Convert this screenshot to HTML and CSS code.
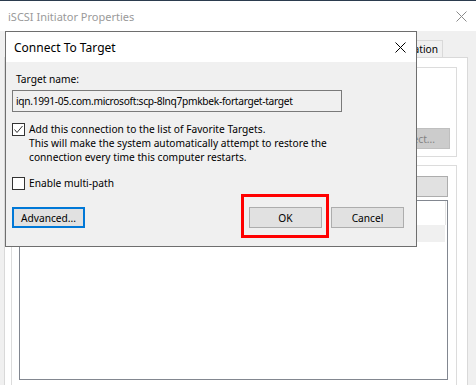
FILE: index.html
```html
<!DOCTYPE html>
<html>
<head>
<meta charset="utf-8">
<link rel="stylesheet" href="styles.css">
</head>
<body>
<div class="screen">
  <div class="bgwin">
    <div class="bg-titlebar">
      <span class="bg-title">iSCSI Initiator Properties</span>
      <svg class="bg-close" width="11" height="11" viewBox="0 0 11 11"><path d="M0.5 0.5 L10.5 10.5 M10.5 0.5 L0.5 10.5" stroke="#8a8a8a" stroke-width="1" fill="none"/></svg>
    </div>
    <div class="bg-body">
      <div class="tabs">
        <div class="tab">Configuration</div>
      </div>
      <div class="panel">
        <div class="group g1">
          <div class="row-end"><div class="btn btn-dis">Quick Connect...</div></div>
        </div>
        <div class="group g2">
          <div class="row-end"><div class="btn btn-refresh">Refresh</div></div>
          <div class="list">
            <div class="list-head"><div class="col"></div></div>
            <div class="list-row"></div>
          </div>
        </div>
      </div>
    </div>
  </div>

  <div class="dialog">
    <div class="dlg-titlebar">
      <span class="dlg-title">Connect To Target</span>
      <svg class="dlg-close" width="11" height="11" viewBox="0 0 11 11"><path d="M0.5 0.5 L10.5 10.5 M10.5 0.5 L0.5 10.5" stroke="#000" stroke-width="1" fill="none"/></svg>
    </div>
    <div class="dlg-body">
      <div class="label">Target name:</div>
      <div class="textbox">iqn.1991-05.com.microsoft:scp-8lnq7pmkbek-fortarget-target</div>
      <div class="check-row first">
        <span class="checkbox">
          <svg width="11" height="11" viewBox="0 0 11 11"><path d="M1.5 5.5 L4 8.5 L9.5 2" stroke="#333" stroke-width="1" fill="none"/></svg>
        </span>
        <div class="check-text">Add this connection to the list of Favorite Targets.<br>This will make the system automatically attempt to restore the<br>connection every time this computer restarts.</div>
      </div>
      <div class="check-row second">
        <span class="checkbox"></span>
        <div class="check-text">Enable multi-path</div>
      </div>
      <div class="btn-row">
        <div class="btn btn-focus">Advanced...</div>
        <div class="btn-group">
          <div class="btn">OK</div>
          <div class="btn">Cancel</div>
        </div>
      </div>
    </div>
  </div>
  <div class="highlight"></div>
</div>
</body>
</html>
```
FILE: styles.css
```css
* { box-sizing: border-box; }
html, body { margin: 0; padding: 0; }
body {
  font-family: "Noto Sans", "Open Sans", sans-serif;
  font-size: 10.2px;
  color: #000;
  background: #f0f0f0;
}
.screen {
  position: relative;
  width: 476px;
  height: 385px;
  overflow: hidden;
  background: #f0f0f0;
}
.bg-titlebar {
  height: 31px;
  background: #fff;
  border-top: 1px solid #2b3b4e;
  display: flex;
  align-items: center;
  justify-content: space-between;
  padding: 0 9px 0 8px;
}
.bg-title {
  color: #9a9a9a;
  font-size: 11px;
}
.bg-body {
  padding-top: 9px;
}
.tabs {
  margin-left: 4px;
  width: 464px;
  height: 17px;
  display: flex;
  justify-content: flex-end;
  padding-right: 25px;
}
.tab {
  height: 17px;
  border: 1px solid #d9d9d9;
  border-bottom: none;
  padding: 0 4px 0 5px;
  line-height: 16px;
  background: #f0f0f0;
  white-space: nowrap;
}
.panel {
  margin-left: 4px;
  width: 464px;
  height: 340px;
  background: #fff;
  border: 1px solid #d9d9d9;
  padding: 9px 10px 0 6px;
}
.group {
  border: 1px solid #dcdcdc;
}
.g1 {
  height: 90px;
  padding: 60px 6px 0 0;
}
.g2 {
  margin-top: 8px;
  height: 260px;
  padding: 10px 7px 0 7px;
}
.row-end {
  display: flex;
  justify-content: flex-end;
}
.btn {
  width: 73px;
  height: 21px;
  background: #e1e1e1;
  border: 1px solid #adadad;
  display: flex;
  align-items: center;
  justify-content: center;
  white-space: nowrap;
}
.btn-dis {
  width: 100px;
  background: #cccccc;
  border-color: #bfbfbf;
  color: #838383;
  justify-content: flex-end;
  padding-right: 14px;
}
.g2 .btn-refresh {
  width: 160px;
  margin-right: 1px;
  justify-content: flex-start;
  padding-left: 20px;
}
.list {
  margin-top: 3px;
  margin-right: 1px;
  height: 180px;
  border: 1px solid #828790;
  background: #fff;
}
.list-head {
  height: 24px;
  display: flex;
}
.list-head .col {
  width: 426px;
  border-right: 1px solid #e5e5e5;
}
.list-row {
  width: 425px;
  height: 17px;
  background: #f0f0f0;
}

/* dialog */
.dialog {
  position: absolute;
  left: 5px;
  top: 31px;
  width: 412px;
  height: 216px;
  border: 1px solid #6e6e6e;
  background: #f0f0f0;
}
.dlg-titlebar {
  height: 30px;
  background: #fff;
  display: flex;
  align-items: center;
  justify-content: space-between;
  padding: 0 10px 0 8px;
}
.dlg-title {
  font-size: 12px;
}
.dlg-body {
  padding: 10px 12px 0 6px;
}
.label {
  line-height: 14px;
  padding-left: 4px;
}
.textbox {
  margin-top: 4px;
  width: 330px;
  height: 22px;
  border: 1px solid #7a7a7a;
  background: #f0f0f0;
  padding-left: 3px;
  line-height: 20px;
  letter-spacing: -0.3px;
  white-space: nowrap;
  overflow: hidden;
}
.check-row {
  display: flex;
  align-items: flex-start;
  gap: 4px;
}
.check-row.first { margin-top: 10px; }
.check-row.second { margin-top: 12px; }
.checkbox {
  width: 13px;
  height: 13px;
  margin-top: 1px;
  border: 1px solid #333;
  background: #fff;
  flex: none;
  display: flex;
  align-items: center;
  justify-content: center;
}
.check-text {
  line-height: 14px;
}
.btn-row {
  margin-top: 17px;
  display: flex;
  justify-content: space-between;
}
.btn-focus {
  border: 2px solid #0078d7;
}
.btn-group {
  display: flex;
  gap: 9px;
}
.highlight {
  position: absolute;
  left: 241px;
  top: 194px;
  width: 88px;
  height: 44px;
  border: 3px solid #ff0000;
}
```
